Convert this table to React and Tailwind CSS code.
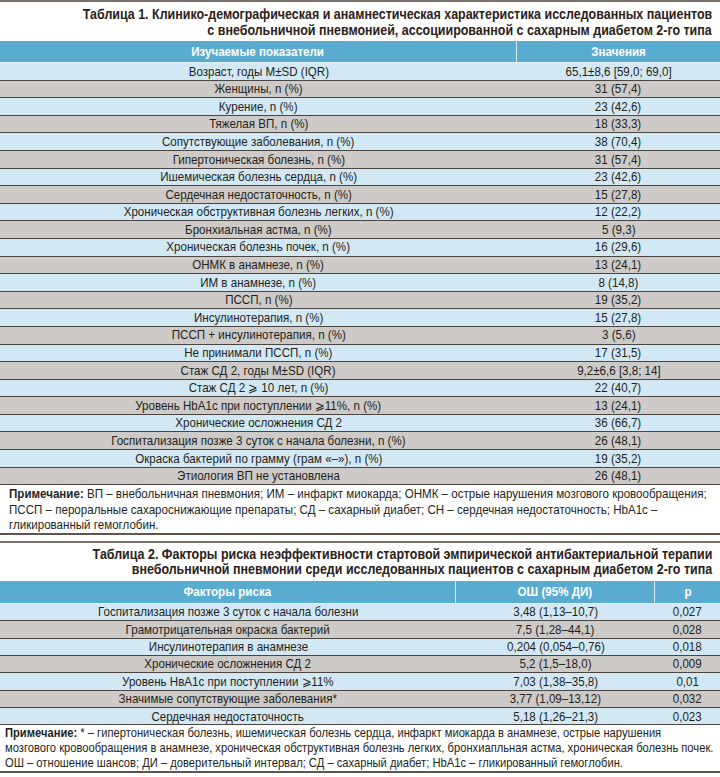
import React from "react";

const rows1 = [
  ["Возраст, годы M±SD (IQR)", "65,1±8,6 [59,0; 69,0]"],
  ["Женщины, n (%)", "31 (57,4)"],
  ["Курение, n (%)", "23 (42,6)"],
  ["Тяжелая ВП, n (%)", "18 (33,3)"],
  ["Сопутствующие заболевания, n (%)", "38 (70,4)"],
  ["Гипертоническая болезнь, n (%)", "31 (57,4)"],
  ["Ишемическая болезнь сердца, n (%)", "23 (42,6)"],
  ["Сердечная недостаточность, n (%)", "15 (27,8)"],
  ["Хроническая обструктивная болезнь легких, n (%)", "12 (22,2)"],
  ["Бронхиальная астма, n (%)", "5 (9,3)"],
  ["Хроническая болезнь почек, n (%)", "16 (29,6)"],
  ["ОНМК в анамнезе, n (%)", "13 (24,1)"],
  ["ИМ в анамнезе, n (%)", "8 (14,8)"],
  ["ПССП, n (%)", "19 (35,2)"],
  ["Инсулинотерапия, n (%)", "15 (27,8)"],
  ["ПССП + инсулинотерапия, n (%)", "3 (5,6)"],
  ["Не принимали ПССП, n (%)", "17 (31,5)"],
  ["Стаж СД 2, годы M±SD (IQR)", "9,2±6,6 [3,8; 14]"],
  ["Стаж СД 2 ⩾ 10 лет, n (%)", "22 (40,7)"],
  ["Уровень HbA1c при поступлении ⩾11%, n (%)", "13 (24,1)"],
  ["Хронические осложнения СД 2", "36 (66,7)"],
  ["Госпитализация позже 3 суток с начала болезни, n (%)", "26 (48,1)"],
  ["Окраска бактерий по граммy (грам «–»), n (%)", "19 (35,2)"],
  ["Этиология ВП не установлена", "26 (48,1)"],
];

const rows2 = [
  ["Госпитализация позже 3 суток с начала болезни", "3,48 (1,13–10,7)", "0,027"],
  ["Грамотрицательная окраска бактерий", "7,5 (1,28–44,1)", "0,028"],
  ["Инсулинотерапия в анамнезе", "0,204 (0,054–0,76)", "0,018"],
  ["Хронические осложнения СД 2", "5,2 (1,5–18,0)", "0,009"],
  ["Уровень HвA1c при поступлении ⩾11%", "7,03 (1,38–35,8)", "0,01"],
  ["Значимые сопутствующие заболевания*", "3,77 (1,09–13,12)", "0,032"],
  ["Сердечная недостаточность", "5,18 (1,26–21,3)", "0,023"],
];

const font = {
  fontFamily: "'Liberation Sans', Arial, sans-serif",
};

// narrow text: Liberation Sans squeezed to condensed proportions
function N({ children }) {
  return <span className="inline-block whitespace-nowrap scale-x-[0.89]">{children}</span>;
}

function TitleLine({ children }) {
  return (
    <div className="flex justify-end">
      <span className="inline-block whitespace-nowrap origin-right scale-x-[0.89]">{children}</span>
    </div>
  );
}

function NoteLine({ children }) {
  return <div className="whitespace-nowrap origin-left scale-x-[0.89]">{children}</div>;
}

function NoteLine2({ children }) {
  return <div className="whitespace-nowrap origin-left scale-x-[0.86]">{children}</div>;
}

export default function App() {
  return (
    <div className="w-[720px] overflow-hidden bg-white text-[#231f20]" style={font}>
      {/* table 1 */}
      <div className="border-t-[2px] border-[#7a726a]" />
      <div className="pt-[5px] pb-[3px] pr-[8px] text-[14px] leading-[15.5px] font-bold text-[#2b2119]">
        <TitleLine>Таблица 1. Клинико-демографическая и анамнестическая характеристика исследованных пациентов</TitleLine>
        <TitleLine>с внебольничной пневмонией, ассоциированной с сахарным диабетом 2-го типа</TitleLine>
      </div>
      <div className="flex h-[21px] bg-[#5aabd0] text-white text-[13px] font-bold">
        <div className="w-[517px] flex items-center justify-center border-r border-[#d8ecf5]"><N>Изучаемые показатели</N></div>
        <div className="flex-1 flex items-center justify-center"><N>Значения</N></div>
      </div>
      {rows1.map((r, idx) => (
        <div
          key={idx}
          className={
            "flex h-[17.6px] text-[13px] border-t " +
            (idx === 0 ? "border-[#e4f1f8] " : "border-[#4a4540] ") +
            (idx % 2 === 0 ? "bg-[#d2e8f4]" : "bg-[#cdcac7]")
          }
        >
          <div className="w-[517px] flex items-center justify-center"><N>{r[0]}</N></div>
          <div className="flex-1 flex items-center justify-center"><N>{r[1]}</N></div>
        </div>
      ))}
      <div className="border-t border-[#4a4540] pl-[9px] pt-[1px] text-[13px] leading-[15.5px]">
        <NoteLine><b>Примечание:</b> ВП – внебольничная пневмония; ИМ – инфаркт миокарда; ОНМК – острые нарушения мозгового кровообращения;</NoteLine>
        <NoteLine>ПССП – пероральные сахароснижающие препараты; СД – сахарный диабет; СН – сердечная недостаточность; HbA1c –</NoteLine>
        <NoteLine>гликированный гемоглобин.</NoteLine>
      </div>
      <div className="border-t-[2px] border-[#5e554c]" />

      {/* table 2 */}
      <div className="mt-[6px] border-t-[2px] border-[#7a726a]" />
      <div className="pt-[4px] pb-[3px] pr-[8px] text-[14px] leading-[15.5px] font-bold text-[#2b2119]">
        <TitleLine>Таблица 2. Факторы риска неэффективности стартовой эмпирической антибактериальной терапии</TitleLine>
        <TitleLine>внебольничной пневмонии среди исследованных пациентов с сахарным диабетом 2-го типа</TitleLine>
      </div>
      <div className="flex h-[22px] bg-[#5aabd0] text-white text-[13px] font-bold">
        <div className="w-[456px] flex items-center justify-center border-r border-[#d8ecf5]"><N>Факторы риска</N></div>
        <div className="w-[199px] flex items-center justify-center border-r border-[#d8ecf5]"><N>ОШ (95% ДИ)</N></div>
        <div className="flex-1 flex items-center justify-center"><N>p</N></div>
      </div>
      {rows2.map((r, idx) => (
        <div
          key={idx}
          className={
            "flex h-[17.4px] text-[13px] border-t " +
            (idx === 0 ? "border-[#e4f1f8] " : "border-[#4a4540] ") +
            (idx % 2 === 0 ? "bg-[#d2e8f4]" : "bg-[#cdcac7]")
          }
        >
          <div className="w-[456px] flex items-center justify-center"><N>{r[0]}</N></div>
          <div className="w-[199px] flex items-center justify-center"><N>{r[1]}</N></div>
          <div className="flex-1 flex items-center justify-center"><N>{r[2]}</N></div>
        </div>
      ))}
      <div className="border-t border-[#4a4540] pl-[5px] pb-[1px] text-[13px] leading-[15px]">
        <NoteLine2><b>Примечание:</b> * – гипертоническая болезнь, ишемическая болезнь сердца, инфаркт миокарда в анамнезе, острые нарушения</NoteLine2>
        <NoteLine2>мозгового кровообращения в анамнезе, хроническая обструктивная болезнь легких, бронхиапльная астма,  хроническая болезнь почек.</NoteLine2>
        <NoteLine2>ОШ – отношение шансов; ДИ – доверительный интервал; СД – сахарный диабет; HbA1c – гликированный гемоглобин.</NoteLine2>
      </div>
      <div className="border-t-[2px] border-[#5e554c]" />
    </div>
  );
}
